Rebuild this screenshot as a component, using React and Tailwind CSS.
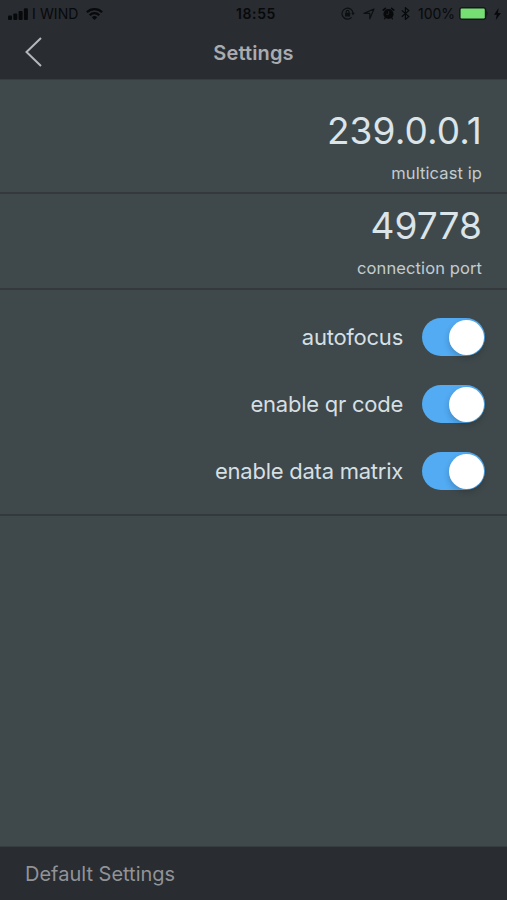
import { useState } from 'react';

function SignalBars() {
  return (
    <svg width="20" height="12" viewBox="0 0 20 12" fill="#08090b">
      <rect x="0" y="7.5" width="4" height="4.5" rx="1" />
      <rect x="5.3" y="5.5" width="4" height="6.5" rx="1" />
      <rect x="10.6" y="3" width="4" height="9" rx="1" />
      <rect x="15.9" y="0.3" width="4" height="11.7" rx="1" />
    </svg>
  );
}

function WifiIcon() {
  return (
    <svg width="17" height="12" viewBox="0 0 17 12" fill="none" stroke="#08090b" strokeWidth="2.3">
      <path d="M0.9 4.3a10.8 10.8 0 0 1 15.2 0" />
      <path d="M3.7 7.2a6.8 6.8 0 0 1 9.6 0" />
      <path d="M8.5 12 5.8 9.3a3.9 3.9 0 0 1 5.4 0z" fill="#08090b" stroke="none" />
    </svg>
  );
}

function RotationLockIcon() {
  return (
    <svg width="14" height="13" viewBox="0 0 14 13" fill="none" stroke="#0d0f11" strokeWidth="1.1">
      <path d="M10.6 10.3A5.5 5.5 0 1 1 12 6.2" />
      <path d="M10.3 5.8h3.5L12 8.3z" fill="#0d0f11" stroke="none" />
      <rect x="4.1" y="5.8" width="5" height="3.6" rx="0.5" fill="#0d0f11" stroke="none" />
      <path d="M5.2 6V4.8a1.4 1.4 0 0 1 2.8 0V6" />
    </svg>
  );
}

function LocationIcon() {
  return (
    <svg width="12" height="12" viewBox="0 0 12 12" fill="none" stroke="#0d0f11" strokeWidth="1.2" strokeLinejoin="round">
      <path d="M11 1 6.8 10.8V5.4H1z" />
    </svg>
  );
}

function AlarmIcon() {
  return (
    <svg width="13" height="13" viewBox="0 0 13 13" fill="none" stroke="#08090b" strokeLinecap="round">
      <circle cx="6.5" cy="7" r="5.1" fill="#08090b" stroke="none" />
      <path d="M1.2 3.1 3.4 1.3M11.8 3.1 9.6 1.3" strokeWidth="1.6" />
      <path d="m3.2 10.8-.7 1M9.8 10.8l.7 1" strokeWidth="1.2" />
      <path d="M6.6 4.6v2.7H4.7" stroke="#292c31" strokeWidth="0.7" />
    </svg>
  );
}

function BluetoothIcon() {
  return (
    <svg width="9" height="13" viewBox="0 0 9 13" fill="none" stroke="#08090b" strokeWidth="1.2">
      <path d="m0.8 3.4 7 6.1-3.4 2.9V0.7l3.4 2.8-7 6.2" />
    </svg>
  );
}

function BatteryIcon() {
  return (
    <svg width="29" height="13" viewBox="0 0 29 13">
      <rect x="0.5" y="0.5" width="26.4" height="12" rx="2.6" fill="#15171a" stroke="#15171a" />
      <rect x="1.6" y="1.6" width="24.2" height="9.8" rx="1.2" fill="#76df74" />
      <path d="M27.6 4.3c1.4.5 1.4 3.9 0 4.4z" fill="#15171a" />
    </svg>
  );
}

function BoltIcon() {
  return (
    <svg width="7" height="12" viewBox="0 0 7 12" fill="#08090b">
      <path d="M4.6 0 0 6.7h2.7L1.8 12 7 4.9H4z" />
    </svg>
  );
}

function StatusBar() {
  return (
    <div className="flex h-[27px] items-center text-[14px] text-[#08090b]">
      <div className="flex w-[236px] items-center pl-2">
        <SignalBars />
        <span className="ml-1 w-[46px] whitespace-nowrap tracking-[0.1px]">I WIND</span>
        <span className="ml-2">
          <WifiIcon />
        </span>
      </div>
      <span className="font-semibold tracking-[0.6px]">18:55</span>
      <div className="ml-auto flex items-center pr-[6px]">
        <RotationLockIcon />
        <span className="ml-2">
          <LocationIcon />
        </span>
        <span className="ml-[7px]">
          <AlarmIcon />
        </span>
        <span className="ml-[6px]">
          <BluetoothIcon />
        </span>
        <span className="ml-2 w-[38px] whitespace-nowrap">100%</span>
        <span className="ml-[3px]">
          <BatteryIcon />
        </span>
        <span className="ml-[6px]">
          <BoltIcon />
        </span>
      </div>
    </div>
  );
}

function Toggle({ checked, onChange, label }) {
  return (
    <button
      type="button"
      role="switch"
      aria-checked={checked}
      aria-label={label}
      onClick={() => onChange(!checked)}
      className={`flex h-[38px] w-[63px] items-center rounded-full px-[1.5px] ${
        checked ? 'justify-end bg-[#52abf3]' : 'justify-start bg-[#6b7577]'
      }`}
    >
      <span className="size-[35px] rounded-full bg-white shadow-[0_3px_6px_rgba(0,0,0,0.2)]" />
    </button>
  );
}

function ValueRow({ value, label, className }) {
  return (
    <div className={`flex flex-col items-end border-b-2 border-[#33393c] pr-[25px] ${className}`}>
      <span className="text-[37px] leading-[44px] tracking-[0.1px] text-[#dae4e9]">{value}</span>
      <span className="mt-[9px] text-[16.5px] leading-[22px] tracking-[0.1px] text-[#c3ccd0]">{label}</span>
    </div>
  );
}

export default function App() {
  const [settings, setSettings] = useState({
    autofocus: true,
    'enable qr code': true,
    'enable data matrix': true,
  });

  return (
    <div className="flex h-[900px] w-[507px] flex-col overflow-hidden bg-[#3f494b] font-['Inter',sans-serif]">
      <header className="h-[80px] border-b border-[#363d40] bg-[#292c31]">
        <StatusBar />
        <div className="grid h-[51px] grid-cols-[1fr_auto_1fr] items-center">
          <button type="button" aria-label="Back" className="pl-6">
            <svg width="19" height="32" viewBox="0 0 19 32" fill="none" stroke="#b5b7ba" strokeWidth="2">
              <path d="M17 1 2.5 15 17 29" />
            </svg>
          </button>
          <h1 className="text-[20px] font-semibold tracking-[0.15px] text-[#a9abaf]">Settings</h1>
        </div>
      </header>

      <ValueRow value="239.0.0.1" label="multicast ip" className="h-[114px] pt-[29px]" />
      <ValueRow value="49778" label="connection port" className="h-[96px] pt-[10px]" />

      <div className="flex h-[226px] flex-col gap-[29px] border-b-2 border-[#33393c] pt-[28px] pr-[22px]">
        {Object.keys(settings).map((name) => (
          <div key={name} className="flex items-center justify-end gap-[19px]">
            <span className="pt-px text-[22px] tracking-[-0.25px] text-[#d6dfe3]">{name}</span>
            <Toggle
              label={name}
              checked={settings[name]}
              onChange={(value) => setSettings({ ...settings, [name]: value })}
            />
          </div>
        ))}
      </div>

      <footer className="mt-auto flex h-[54px] items-center border-t border-[#363d40] bg-[#292c31] pl-[25px]">
        <button type="button" className="text-[20px] text-[#919397]">
          Default Settings
        </button>
      </footer>
    </div>
  );
}
